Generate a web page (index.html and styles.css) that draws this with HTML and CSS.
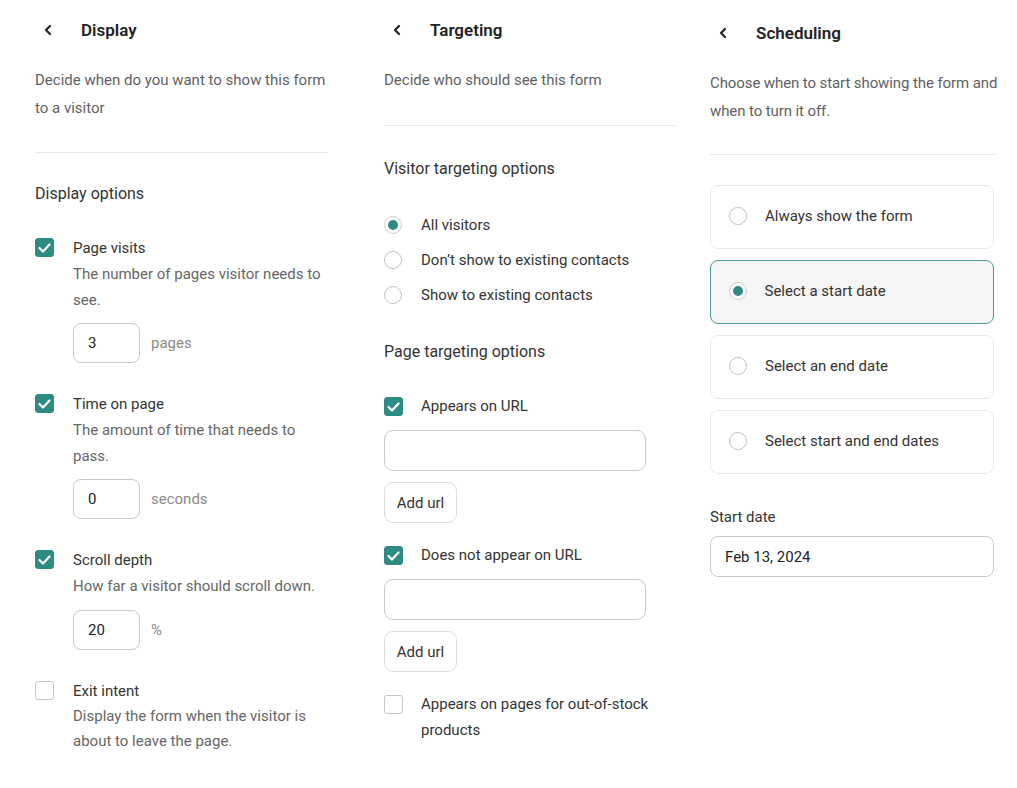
FILE: index.html
```html
<!DOCTYPE html>
<html lang="en">
<head>
<meta charset="utf-8">
<title>Form settings</title>
<link rel="stylesheet" href="styles.css">
</head>
<body>
<div class="page">

  <section class="col col-display">
    <div class="header">
      <svg class="back" width="10" height="12" viewBox="0 0 10 12"><polyline points="7,2 3,6 7,10" fill="none" stroke="#222" stroke-width="2.2" stroke-linecap="round" stroke-linejoin="round"/></svg>
      <h1 class="title">Display</h1>
    </div>
    <p class="desc">Decide when do you want to show this form to a visitor</p>
    <div class="divider"></div>
    <h2 class="section">Display options</h2>

    <div class="opt first">
      <span class="cb checked"><svg width="13" height="10" viewBox="0 0 13 10"><polyline points="1.5,5 5,8.5 11.5,1.5" fill="none" stroke="#fff" stroke-width="2.2" stroke-linecap="round" stroke-linejoin="round"/></svg></span>
      <div class="opt-body">
        <div class="label">Page visits</div>
        <div class="help">The number of pages visitor needs to see.</div>
        <div class="num-row"><div class="num">3</div><span class="unit">pages</span></div>
      </div>
    </div>

    <div class="opt">
      <span class="cb checked"><svg width="13" height="10" viewBox="0 0 13 10"><polyline points="1.5,5 5,8.5 11.5,1.5" fill="none" stroke="#fff" stroke-width="2.2" stroke-linecap="round" stroke-linejoin="round"/></svg></span>
      <div class="opt-body">
        <div class="label">Time on page</div>
        <div class="help">The amount of time that needs to pass.</div>
        <div class="num-row"><div class="num">0</div><span class="unit">seconds</span></div>
      </div>
    </div>

    <div class="opt">
      <span class="cb checked"><svg width="13" height="10" viewBox="0 0 13 10"><polyline points="1.5,5 5,8.5 11.5,1.5" fill="none" stroke="#fff" stroke-width="2.2" stroke-linecap="round" stroke-linejoin="round"/></svg></span>
      <div class="opt-body">
        <div class="label">Scroll depth</div>
        <div class="help">How far a visitor should scroll down.</div>
        <div class="num-row num-row-tight"><div class="num">20</div><span class="unit">%</span></div>
      </div>
    </div>

    <div class="opt">
      <span class="cb"></span>
      <div class="opt-body">
        <div class="label">Exit intent</div>
        <div class="help help-tight">Display the form when the visitor is about to leave the page.</div>
      </div>
    </div>
  </section>

  <section class="col col-targeting">
    <div class="header">
      <svg class="back" width="10" height="12" viewBox="0 0 10 12"><polyline points="7,2 3,6 7,10" fill="none" stroke="#222" stroke-width="2.2" stroke-linecap="round" stroke-linejoin="round"/></svg>
      <h1 class="title">Targeting</h1>
    </div>
    <p class="desc">Decide who should see this form</p>
    <div class="divider divider-t"></div>
    <h2 class="section section-visitor">Visitor targeting options</h2>

    <div class="radio-list">
      <div class="radio-row"><span class="radio on"><span class="dot"></span></span><span class="label">All visitors</span></div>
      <div class="radio-row"><span class="radio"></span><span class="label">Don’t show to existing contacts</span></div>
      <div class="radio-row"><span class="radio"></span><span class="label">Show to existing contacts</span></div>
    </div>

    <h2 class="section section-page">Page targeting options</h2>

    <div class="check-row first-check">
      <span class="cb checked"><svg width="13" height="10" viewBox="0 0 13 10"><polyline points="1.5,5 5,8.5 11.5,1.5" fill="none" stroke="#fff" stroke-width="2.2" stroke-linecap="round" stroke-linejoin="round"/></svg></span>
      <span class="label">Appears on URL</span>
    </div>
    <div class="url-input"></div>
    <div class="btn">Add url</div>

    <div class="check-row">
      <span class="cb checked"><svg width="13" height="10" viewBox="0 0 13 10"><polyline points="1.5,5 5,8.5 11.5,1.5" fill="none" stroke="#fff" stroke-width="2.2" stroke-linecap="round" stroke-linejoin="round"/></svg></span>
      <span class="label">Does not appear on URL</span>
    </div>
    <div class="url-input"></div>
    <div class="btn">Add url</div>

    <div class="check-row">
      <span class="cb"></span>
      <span class="label">Appears on pages for out-of-stock products</span>
    </div>
  </section>

  <section class="col col-scheduling">
    <div class="header">
      <svg class="back" width="10" height="12" viewBox="0 0 10 12"><polyline points="7,2 3,6 7,10" fill="none" stroke="#222" stroke-width="2.2" stroke-linecap="round" stroke-linejoin="round"/></svg>
      <h1 class="title">Scheduling</h1>
    </div>
    <p class="desc desc-wide">Choose when to start showing the form and when to turn it off.</p>
    <div class="divider divider-s"></div>

    <div class="cards">
      <div class="card"><span class="radio"></span><span class="label">Always show the form</span></div>
      <div class="card selected"><span class="radio on"><span class="dot"></span></span><span class="label">Select a start date</span></div>
      <div class="card"><span class="radio"></span><span class="label">Select an end date</span></div>
      <div class="card"><span class="radio"></span><span class="label">Select start and end dates</span></div>
    </div>

    <div class="field-label">Start date</div>
    <div class="date-input">Feb 13, 2024</div>
  </section>

</div>
</body>
</html>
```

FILE: styles.css
```css
* { box-sizing: border-box; }

body {
  margin: 0;
  background: #ffffff;
  font-family: Roboto, "Liberation Sans", sans-serif;
  color: #333333;
}

.page {
  display: flex;
  align-items: flex-start;
}

.col { display: flex; flex-direction: column; }

.col-display { margin-left: 35px; width: 293px; padding-top: 18px; }
.col-targeting { margin-left: 56px; width: 292px; padding-top: 18px; }
.col-scheduling { margin-left: 34px; width: 285px; padding-top: 21px; }

.header {
  display: flex;
  align-items: center;
  height: 24px;
}

.back { margin-left: 8px; flex: none; }

.title {
  margin: 0 0 0 28px;
  font-size: 17px;
  font-weight: 600;
  color: #222222;
  line-height: 24px;
}

.desc {
  margin: 24px 0 0;
  font-size: 15px;
  line-height: 28px;
  color: #5f5f5f;
}
.desc-wide {
  margin-right: -12px;
  letter-spacing: -0.1px;
}

.divider {
  margin-top: 30px;
  height: 1px;
  background: #e7e7e7;
}
.divider-t { margin-top: 31px; }
.divider-s { margin-top: 29px; }

.section {
  margin: 29px 0 0;
  font-size: 16px;
  font-weight: 400;
  line-height: 24px;
  color: #333333;
}
.section-visitor { margin-top: 31px; }

.label {
  font-size: 15px;
  line-height: 26px;
  color: #333333;
}

/* checkboxes */
.cb {
  width: 19px;
  height: 19px;
  border-radius: 3px;
  border: 1.5px solid #c4c4c4;
  background: #ffffff;
  display: flex;
  align-items: center;
  justify-content: center;
  flex: none;
  margin-top: 3px;
}
.cb.checked {
  background: #2e8b84;
  border-color: #2e8b84;
}

/* display options */
.opt {
  display: flex;
  gap: 19px;
  margin-top: 28px;
}
.opt.first { margin-top: 29px; }

.help {
  font-size: 15px;
  line-height: 26px;
  color: #666666;
}
.help-tight { line-height: 25px; }

.num-row {
  display: flex;
  align-items: center;
  margin-top: 10px;
}
.num-row-tight { margin-top: 11px; }

.num {
  width: 67px;
  height: 40px;
  border: 1px solid #c9c9c9;
  border-radius: 8px;
  padding-left: 14px;
  display: flex;
  align-items: center;
  font-size: 15px;
  color: #222222;
}

.unit {
  margin-left: 11px;
  font-size: 15px;
  color: #8a8a8a;
}

/* radios */
.radio-list { margin-top: 26px; }

.radio-row {
  display: flex;
  align-items: center;
  height: 35px;
  gap: 19px;
}

.radio {
  width: 18px;
  height: 18px;
  border-radius: 50%;
  border: 1.5px solid #c2c2c2;
  background: #ffffff;
  flex: none;
  display: flex;
  align-items: center;
  justify-content: center;
}
.radio.on { border-color: #cfcfcf; }
.radio .dot {
  width: 10px;
  height: 10px;
  border-radius: 50%;
  background: #2e8b84;
}

.section-page { margin-top: 28px; }

/* targeting checks */
.check-row {
  display: flex;
  align-items: flex-start;
  gap: 18px;
  margin-top: 19px;
}
.check-row .cb { margin-top: 4px; }
.check-row.first-check { margin-top: 29px; }

.url-input {
  margin-top: 11px;
  width: 262px;
  height: 41px;
  border: 1px solid #c9c9c9;
  border-radius: 9px;
}

.btn {
  margin-top: 11px;
  width: 73px;
  height: 41px;
  border: 1px solid #dcdcdc;
  border-radius: 9px;
  display: flex;
  align-items: center;
  justify-content: center;
  font-size: 15px;
  color: #333333;
}

/* scheduling */
.cards {
  margin-top: 30px;
  display: flex;
  flex-direction: column;
  gap: 11px;
}

.card {
  width: 284px;
  height: 64px;
  border: 1px solid #e9e9e9;
  border-radius: 8px;
  display: flex;
  align-items: center;
  padding-left: 18px;
  gap: 18px;
  padding-bottom: 2px;
}
.card.selected {
  background: #f5f5f5;
  border: 1.5px solid #4a9e97;
  padding-left: 17.5px;
}

.field-label {
  margin-top: 31px;
  font-size: 15px;
  line-height: 24px;
  color: #333333;
}

.date-input {
  margin-top: 7px;
  width: 284px;
  height: 41px;
  border: 1px solid #c9c9c9;
  border-radius: 8px;
  padding-left: 14px;
  display: flex;
  align-items: center;
  font-size: 15px;
  color: #222222;
}
```
